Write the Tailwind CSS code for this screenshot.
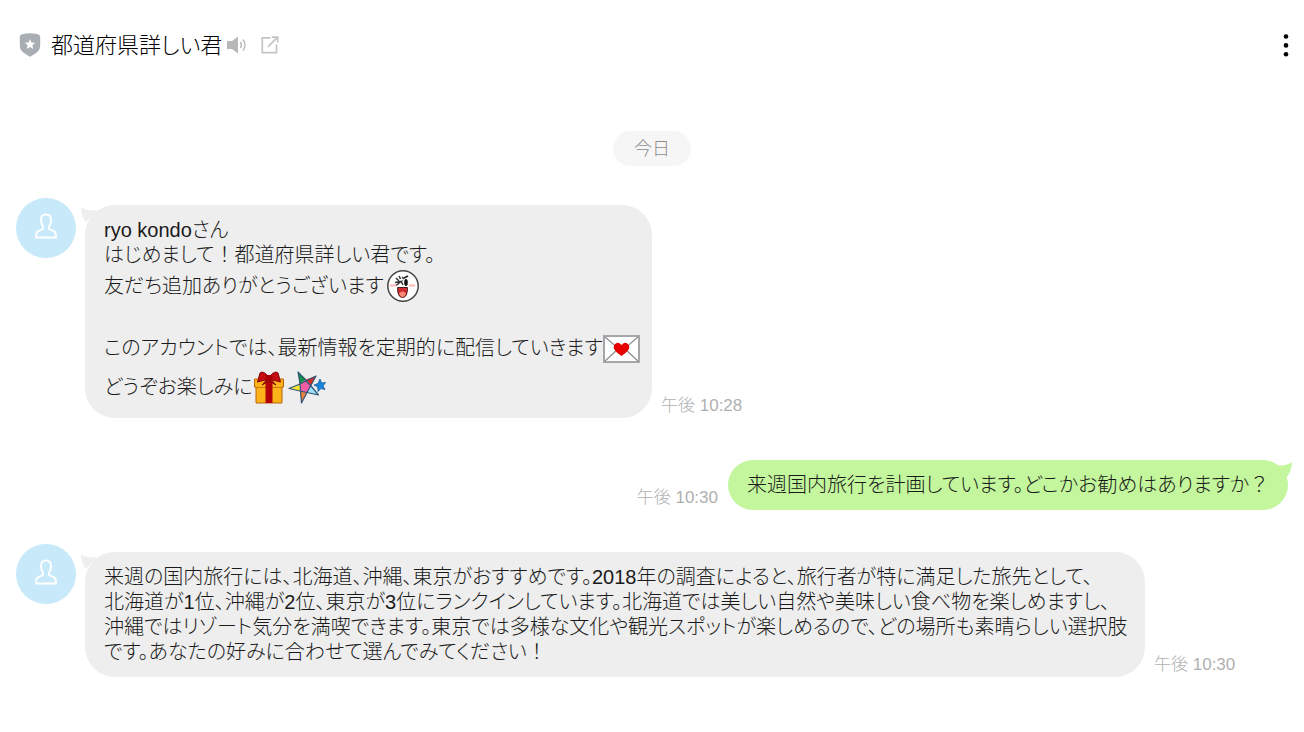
<!DOCTYPE html>
<html lang="ja">
<head>
<meta charset="utf-8">
<meta name="viewport" content="width=device-width, initial-scale=1">
<title>都道府県詳しい君</title>
<script src="https://cdn.jsdelivr.net/npm/@tailwindcss/browser@4"></script>
</head>
<body class="min-h-screen bg-white font-['Liberation_Sans','Noto_Sans_CJK_JP',sans-serif] text-xl leading-[25px] text-[#1a1a1a] [font-feature-settings:'palt']">
<svg class="hidden">
  <symbol id="person" viewBox="0 0 22 26"><path d="M1.200 24.500V21.500Q1.200 19 4 17.800L7 16.500Q8.600 15.700 7.800 13.500Q6 10.800 6 7Q6 1.500 11 1.500Q16 1.500 16 7Q16 10.800 14.200 13.500Q13.400 15.700 15 16.500L18 17.800Q20.800 19 20.800 21.500V24.500Z" fill="none" stroke="#fff" stroke-width="1.900"/></symbol>
</svg>
<header class="flex h-[90px] items-center pl-[19px] pr-1">
  <svg class="h-6 w-[22px] shrink-0" viewBox="0 0 21 24"><path d="M2 1.500Q10.500-1 19 1.500Q20.700 2 20.700 4V12.500Q20.700 17 16.500 20L11.500 23.300Q10.500 24 9.500 23.300L4.500 20Q.3 17 .3 12.500V4Q.3 2 2 1.500Z" fill="#a9adb4"/><path d="m10.500 6 1.500 3.400 3.700.4-2.800 2.500.8 3.600-3.200-1.900-3.200 1.900.8-3.600-2.800-2.500 3.700-.4Z" fill="#fff"/></svg>
  <h1 class="ml-[10px] w-[169px] whitespace-nowrap text-[22px] font-light text-black">都道府県詳しい君</h1>
  <button type="button" aria-label="音声" class="ml-[6px] shrink-0"><svg class="h-5 w-[22px]" viewBox="0 0 22 20"><path d="M1 6H6L12 1.500V18.500L6 14H1Z" fill="#b7b7b7"/><path d="M14.500 7Q16.500 10 14.500 13M17 4.500Q21 10 17 15.500" fill="none" stroke="#b7b7b7" stroke-width="1.400"/></svg></button>
  <a href="#" aria-label="新しいウィンドウで開く" class="ml-[13px] shrink-0"><svg class="h-[18px] w-[18px]" viewBox="0 0 18 18" fill="none" stroke="#c4c4c4" stroke-width="1.700"><path d="M9.500 1.800H1.300V16.700H15.500V8.500M7 10.800 16 1.700M11 1.200H16.700V6.500"/></svg></a>
  <button type="button" aria-label="メニュー" class="ml-auto flex w-7 justify-center"><svg class="h-6 w-5" viewBox="0 0 20 24" fill="#000"><circle cx="10" cy="3.500" r="2.300"/><circle cx="10" cy="12.400" r="2.300"/><circle cx="10" cy="21.300" r="2.300"/></svg></button>
</header>
<main class="flex flex-col px-4 pt-[41px] font-light">
  <div class="flex h-[35px] w-[78px] items-center justify-center self-center rounded-full bg-[#f6f6f6] text-lg text-[#8c8c8c]">今日</div>

  <section class="mt-8 flex items-start">
    <div class="flex h-[60px] w-[60px] shrink-0 items-center justify-center rounded-full bg-[#c8e9fa] pb-1"><svg class="h-[26px] w-[22px]"><use href="#person"/></svg></div>
    <div class="relative ml-[9px] mt-[7px] w-[567px] shrink-0 rounded-[30px] bg-[#eee] px-[19px] pb-[11px] pt-[13px] whitespace-nowrap">
      <svg class="absolute -left-1 top-0.5 h-4 w-5" viewBox="0 0 20 16"><path d="M0 0Q6 4.500 16 3L5 15Q0 9 0 0Z" fill="#eee"/></svg>
      <p><span class="font-normal">ryo kondo</span>さん</p>
      <p>はじめまして<span class="[font-feature-settings:normal]">！</span>都道府県詳しい君です。</p>
      <p class="flex h-9 items-center">友だち追加ありがとうございます<svg class="ml-0.5 h-8 w-[34px] shrink-0" viewBox="0 0 34 32"><circle cx="17" cy="16" r="15.200" fill="#fff" stroke="#444" stroke-width="1.500"/><path d="m10 8 3 3M13 6l1.500 3M9 12.500l6-1-5 4M15 11l2 4M16 7l2 2" fill="none" stroke="#333" stroke-width="1.500"/><ellipse cx="20" cy="12.500" rx="1.800" ry="3.500" fill="#111"/><path d="m18 8 4-2" fill="none" stroke="#222" stroke-width="1.600"/><path d="M5 15.500h4M24 15.500h4" stroke="#ffc0c0" stroke-width="2.600" stroke-linecap="round"/><path d="M11.500 17.500H21.500Q21.500 27.500 16.500 27.500Q11.500 27.500 11.500 17.500Z" fill="#d02a30" stroke="#41201f"/><path d="M13 23.500Q16.500 19.500 20 23.500Q18.500 27 16.500 27Q14.500 27 13 23.500Z" fill="#ff8b75"/></svg></p>
      <p class="h-[25px]"></p>
      <p class="flex h-[39px] items-center">このアカウントでは、最新情報を定期的に配信していきます<svg class="h-7 w-[37px] shrink-0" viewBox="0 0 37 28"><path d="M1 1H36V27H1Z" fill="#fff" stroke="#a6a6a6" stroke-width="2"/><path d="m2 2 14 12h5L35 2M2 26l12-11M35 26 23 15" fill="none" stroke="#8c8c8c" stroke-width="1.200"/><path d="M18.500 21Q9 15 11 10.500Q14 5.500 18.500 10Q23 5.500 26 10.500Q28 15 18.500 21Z" fill="#e60000"/></svg></p>
      <p class="flex h-[39px] items-center">どうぞお楽しみに<svg class="h-[34px] w-8 shrink-0" viewBox="0 0 32 34"><path d="M1.500 8H30.500V16H29V32H3V16H1.500Z" fill="#fcb31a" stroke="#b96508"/><path d="M2 16.500H30" stroke="#c7780a"/><path d="M12.500 9H19.500V32H12.500Z" fill="#b40008"/><path d="M16 6Q10-1 7 2L4.500 11L14 8.500L9 14 16 10 23 14 18 8.500 27.500 11 25 2Q22-1 16 6Z" fill="#c50d12" stroke="#86060a"/><path d="M12.500 4H19.500V10H12.500Z" fill="#a90006"/></svg><svg class="ml-[3px] h-[34px] w-[38px] shrink-0" viewBox="0 0 38 34"><path d="M10 1 18.500 8.500 12 13Z" fill="#169447"/><path d="M28 5 23 15 18 8.500Z" fill="#e1291d"/><path d="M30.500 24 19 21.500 23 15Z" fill="#9edff9"/><path d="M13.500 32 12 20 19 21.500Z" fill="#ef843c"/><path d="M1 17.500 12 13 12 20Z" fill="#f9e633"/><path d="m12 13 6-4.500 5 6.500-4 6.500-7-1.500Z" fill="#f35da3"/><path d="M10 1 23 15 30.500 24 12 20 1 17.500 12 13 28 5 19 21.500 13.500 32 12 13Z" fill="none" stroke="#30567a" stroke-width="1.200" stroke-linejoin="round"/><path d="m32 8 1.500 4 4-.5-2.500 3.500 2 3.500-4-1-3 3-.2-4.500-3.800-2 4-1.500Z" fill="#1685dd" stroke="#155b98" stroke-width=".8"/></svg></p>
    </div>
    <time class="ml-[9px] self-end whitespace-nowrap text-[17px] text-[#b0b0b0]">午後 <span class="font-normal">10:28</span></time>
  </section>

  <section class="mt-[42px] flex items-end justify-end">
    <time class="mr-[10px] whitespace-nowrap text-[17px] text-[#b0b0b0]">午後 <span class="font-normal">10:30</span></time>
    <div class="relative w-[560px] shrink-0 rounded-full bg-[#c3f69d] px-[19px] py-[12px] leading-[26px] whitespace-nowrap">来週国内旅行を計画しています。どこかお勧めはありますか<span class="[font-feature-settings:normal]">？</span><svg class="absolute -right-1 top-0.5 h-4 w-5" viewBox="0 0 20 16"><path d="M20 0Q14 4.500 4 3L15 15Q20 8 20 0Z" fill="#c3f69d"/></svg></div>
  </section>

  <section class="mt-[34px] flex items-start">
    <div class="flex h-[60px] w-[60px] shrink-0 items-center justify-center rounded-full bg-[#c8e9fa] pb-1"><svg class="h-[26px] w-[22px]"><use href="#person"/></svg></div>
    <div class="relative ml-[9px] mt-2 w-[1060px] shrink-0 rounded-[30px] bg-[#eee] px-[19px] pb-3 pt-[13px] whitespace-nowrap">
      <svg class="absolute -left-1 top-0.5 h-4 w-5" viewBox="0 0 20 16"><path d="M0 0Q6 4.500 16 3L5 15Q0 9 0 0Z" fill="#eee"/></svg>
      <p>来週の国内旅行には、北海道、沖縄、東京がおすすめです。<span class="font-normal">2018</span>年の調査によると、旅行者が特に満足した旅先として、<br>北海道が<span class="font-normal">1</span>位、沖縄が<span class="font-normal">2</span>位、東京が<span class="font-normal">3</span>位にランクインしています。北海道では美しい自然や美味しい食べ物を楽しめますし、<br>沖縄ではリゾート気分を満喫できます。東京では多様な文化や観光スポットが楽しめるので、どの場所も素晴らしい選択肢<br>です。あなたの好みに合わせて選んでみてください<span class="[font-feature-settings:normal]">！</span></p>
    </div>
    <time class="ml-[9px] self-end whitespace-nowrap text-[17px] text-[#b0b0b0]">午後 <span class="font-normal">10:30</span></time>
  </section>
</main>
</body>
</html>
